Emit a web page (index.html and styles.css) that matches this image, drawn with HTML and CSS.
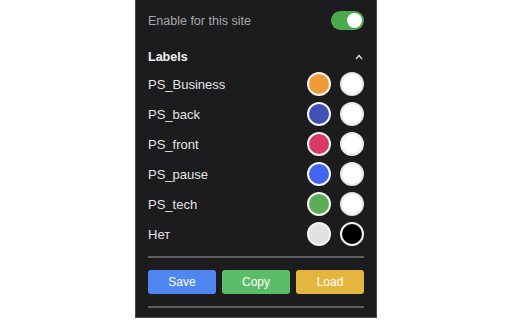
FILE: index.html
```html
<!DOCTYPE html>
<html>
<head>
<meta charset="utf-8">
<link rel="stylesheet" href="styles.css">
</head>
<body>
<div class="panel">
  <div class="enable">
    <span class="enable-text">Enable for this site</span>
    <span class="toggle"><span class="knob"></span></span>
  </div>
  <div class="labels-head">
    <span class="labels-title">Labels</span>
    <svg class="chev" width="8" height="6" viewBox="0 0 8 6"><polyline points="1,5 4,1.5 7,5" fill="none" stroke="#cfcfcf" stroke-width="1.6"/></svg>
  </div>
  <div class="rows">
    <div class="row"><span class="name">PS_Business</span><span class="dots"><span class="dot" style="background:#f19b38"></span><span class="dot white"></span></span></div>
    <div class="row"><span class="name">PS_back</span><span class="dots"><span class="dot" style="background:#3f51b5"></span><span class="dot white"></span></span></div>
    <div class="row"><span class="name">PS_front</span><span class="dots"><span class="dot" style="background:#d83a64"></span><span class="dot white"></span></span></div>
    <div class="row"><span class="name">PS_pause</span><span class="dots"><span class="dot" style="background:#3f66ec"></span><span class="dot white"></span></span></div>
    <div class="row"><span class="name">PS_tech</span><span class="dots"><span class="dot" style="background:#5aad55"></span><span class="dot white"></span></span></div>
    <div class="row"><span class="name">Нет</span><span class="dots"><span class="dot" style="background:#e2e2e2"></span><span class="dot black"></span></span></div>
  </div>
  <div class="divider first"></div>
  <div class="buttons">
    <button class="btn save">Save</button>
    <button class="btn copy">Copy</button>
    <button class="btn load">Load</button>
  </div>
  <div class="divider last"></div>
</div>
</body>
</html>
```
FILE: styles.css
```css
html, body {
  margin: 0;
  padding: 0;
  background: #ffffff;
}
body {
  width: 512px;
  height: 320px;
  overflow: hidden;
  font-family: "Liberation Sans", Arial, sans-serif;
}
.panel {
  width: 240px;
  height: 318px;
  margin: 0 auto;
  background: #1c1c1e;
  border-left: 1px solid #4a4a4c;
  border-right: 1px solid #4a4a4c;
  border-bottom: 1px solid #4a4a4c;
  box-sizing: content-box;
  padding: 0 12px;
  box-sizing: border-box;
  width: 242px;
  display: flex;
  flex-direction: column;
}
.enable {
  display: flex;
  align-items: center;
  justify-content: space-between;
  height: 19px;
  margin-top: 11px;
}
.enable-text {
  color: #a8a8aa;
  font-size: 12.5px;
}
.toggle {
  width: 33px;
  height: 19px;
  border-radius: 10px;
  background: #4caa4e;
  position: relative;
  display: block;
}
.knob {
  position: absolute;
  right: 2px;
  top: 2px;
  width: 15px;
  height: 15px;
  border-radius: 50%;
  background: #ffffff;
}
.labels-head {
  display: flex;
  align-items: center;
  justify-content: space-between;
  height: 16px;
  margin-top: 19px;
}
.labels-title {
  color: #f2f2f2;
  font-weight: bold;
  font-size: 12.5px;
}
.chev {
  margin-right: 1px;
  display: block;
}
.rows {
  display: flex;
  flex-direction: column;
  margin-top: 4px;
}
.row {
  height: 30px;
  display: flex;
  align-items: center;
  justify-content: space-between;
}
.name {
  color: #e4e4e4;
  font-size: 13px;
}
.dots {
  display: flex;
  gap: 9px;
}
.dot {
  width: 24px;
  height: 24px;
  border-radius: 50%;
  box-sizing: border-box;
  border: 2px solid #f5f5f5;
  display: block;
}
.dot.white {
  background: #ffffff;
  border-color: #e8e8e8;
}
.dot.black {
  background: #000000;
  border-color: #f2f2f2;
}
.divider {
  height: 2px;
  background: #5e5e60;
}
.divider.first {
  margin-top: 7px;
}
.buttons {
  display: flex;
  gap: 6px;
  margin-top: 12px;
}
.btn {
  flex: 1;
  height: 24px;
  border: none;
  border-radius: 3px;
  color: #ffffff;
  font-family: "Liberation Sans", Arial, sans-serif;
  font-size: 12px;
  padding: 0;
}
.save { background: #4f86ef; }
.copy { background: #5abe68; }
.load { background: #e4b63d; }
.divider.last {
  margin-top: 12px;
}
```
